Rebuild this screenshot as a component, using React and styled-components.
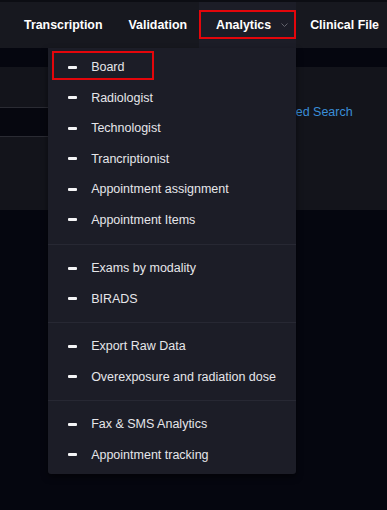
import React from "react";
import styled, { createGlobalStyle } from "styled-components";

const sections = [
  ["Board", "Radiologist", "Technologist", "Trancriptionist", "Appointment assignment", "Appointment Items"],
  ["Exams by modality", "BIRADS"],
  ["Export Raw Data", "Overexposure and radiation dose"],
  ["Fax & SMS Analytics", "Appointment tracking"],
];

const App = () => {
  return (
    <Page>
      <GlobalStyle />
      <NavBar>
        <NavItem>Transcription</NavItem>
        <NavItem>Validation</NavItem>
        <NavItem $open $marked>
          Analytics
          <Chevron viewBox="0 0 7 4">
            <path d="M0.5 0.5 L3.5 3.5 L6.5 0.5" fill="none" stroke="currentColor" strokeWidth="1" />
          </Chevron>
          <Dropdown>
            {sections.map((items, i) => (
              <Section key={i} $index={i} $last={i === sections.length - 1}>
                {items.map((label) => (
                  <MenuItem key={label} $marked={label === "Board"}>
                    <Dash />
                    {label}
                  </MenuItem>
                ))}
              </Section>
            ))}
          </Dropdown>
        </NavItem>
        <NavItem>Clinical File</NavItem>
      </NavBar>
      <Panel>
        <PanelHead />
        <SearchRow>
          <SearchField />
          <SearchLink>Advanced Search</SearchLink>
        </SearchRow>
        <PanelBody />
      </Panel>
    </Page>
  );
};

// ----------------- Styled Components -----------------

const GlobalStyle = createGlobalStyle`
  body {
    margin: 0;
    background-color: #05060f;
    font-family: "Liberation Sans", Arial, sans-serif;
  }
`;

const Page = styled.div`
  width: 387px;
  height: 510px;
  overflow: hidden;
  background-color: #05060f;
`;

const NavBar = styled.nav`
  height: 46px;
  border-top: 2px solid #0c0d13;
  background-color: #17181f;
  display: flex;
  flex-direction: row;
  align-items: stretch;
  padding-left: 10px;
`;

const NavItem = styled.div`
  position: relative;
  display: flex;
  align-items: center;
  padding: ${(p) => (p.$open ? "0 8px 0 17px" : "0 12px 0 14px")};
  font-size: 12.4px;
  font-weight: 700;
  color: #ffffff;
  white-space: nowrap;
  background-color: ${(p) => (p.$open ? "#1c1d27" : "transparent")};

  &::after {
    content: "";
    display: ${(p) => (p.$marked ? "block" : "none")};
    position: absolute;
    left: 0;
    right: 0;
    top: 8px;
    height: 29px;
    border: 2px solid #e4060b;
    box-sizing: border-box;
  }
`;

const Chevron = styled.svg`
  width: 7px;
  height: 4px;
  margin-left: 10px;
  color: #62636c;
`;

const Dropdown = styled.div`
  position: absolute;
  top: 100%;
  right: 0;
  width: 248px;
  background-color: #1c1d27;
  border-radius: 0 0 3px 3px;
  box-shadow: 0 3px 6px rgba(0, 0, 0, 0.5);
  z-index: 10;
`;

const Section = styled.div`
  padding: ${(p) => (p.$index === 0 ? "4px" : "8px")} 0 ${(p) => (p.$last ? "4px" : p.$index === 0 ? "9px" : "8px")};
  border-top: ${(p) => (p.$index === 0 ? "none" : "1px solid #272833")};
`;

const MenuItem = styled.div`
  position: relative;
  height: 30.5px;
  display: flex;
  align-items: center;
  padding-left: 20px;
  font-size: 12.5px;
  font-weight: 400;
  color: #e6e6ea;

  &::after {
    content: "";
    display: ${(p) => (p.$marked ? "block" : "none")};
    position: absolute;
    left: 4px;
    top: -1px;
    width: 102px;
    height: 29px;
    border: 2px solid #e4060b;
    box-sizing: border-box;
  }
`;

const Dash = styled.span`
  width: 9px;
  height: 3px;
  border-radius: 1px;
  background-color: #f4f4f6;
  margin-right: 14px;
`;

const Panel = styled.div`
  margin-top: 19px;
  background-color: #13141b;
  display: flex;
  flex-direction: column;
`;

const PanelHead = styled.div`
  height: 40px;
`;

const SearchRow = styled.div`
  height: 30px;
  display: flex;
  flex-direction: row;
  align-items: flex-start;
`;

const SearchField = styled.div`
  width: 250px;
  height: 28px;
  background-color: #06070f;
  border-top: 1px solid #2a2b33;
  border-bottom: 1px solid #2a2b33;
`;

const SearchLink = styled.a`
  margin-left: 4px;
  margin-top: -2px;
  font-size: 12.5px;
  color: #3a8ed8;
  cursor: pointer;
  white-space: nowrap;
`;

const PanelBody = styled.div`
  height: 73px;
`;

// -------------- Export ----------------

export default App;
